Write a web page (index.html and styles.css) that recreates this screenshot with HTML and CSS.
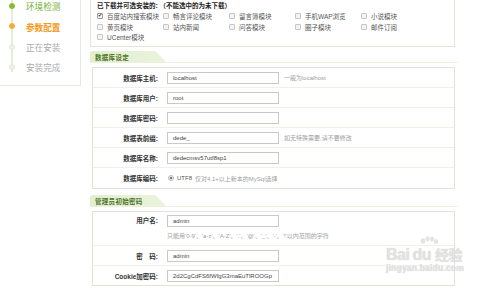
FILE: index.html
```html
<!DOCTYPE html>
<html lang="zh-CN">
<head>
    <meta charset="UTF-8">
    <title>DedeCMS 安装 - 参数配置</title>
    <link rel="stylesheet" href="styles.css">
</head>
<body>
    <div class="page">
        <div class="steps">
            <div class="step done"><span class="dot"></span>环境检测</div>
            <div class="step now"><span class="dot"></span>参数配置</div>
            <div class="step"><span class="dot"></span>正在安装</div>
            <div class="step"><span class="dot"></span>安装完成</div>
        </div>

        <div class="content">
            <div class="modules">
                <div class="mod-title">已下载并可选安装的: （不能选中的为未下载）</div>
                <div class="mod-grid">
                    <div class="mod"><span class="box checked">✔</span>百度站内搜索模块</div>
                    <div class="mod"><span class="box"></span>畅言评论模块</div>
                    <div class="mod"><span class="box"></span>留言簿模块</div>
                    <div class="mod"><span class="box"></span>手机WAP浏览</div>
                    <div class="mod"><span class="box"></span>小说模块</div>
                    <div class="mod"><span class="box"></span>黄页模块</div>
                    <div class="mod"><span class="box"></span>站内新闻</div>
                    <div class="mod"><span class="box"></span>问答模块</div>
                    <div class="mod"><span class="box"></span>圈子模块</div>
                    <div class="mod"><span class="box"></span>邮件订阅</div>
                    <div class="mod"><span class="box"></span>UCenter模块</div>
                </div>
            </div>

            <div class="sect"><span class="sect-tab">数据库设定</span></div>
            <div class="form">
                <div class="row">
                    <label>数据库主机:</label>
                    <span class="input">localhost</span>
                    <span class="hint">一般为localhost</span>
                </div>
                <div class="row">
                    <label>数据库用户:</label>
                    <span class="input">root</span>
                </div>
                <div class="row">
                    <label>数据库密码:</label>
                    <span class="input"></span>
                </div>
                <div class="row">
                    <label>数据表前缀:</label>
                    <span class="input">dede_</span>
                    <span class="hint">如无特殊需要,请不要修改</span>
                </div>
                <div class="row">
                    <label>数据库名称:</label>
                    <span class="input">dedecmsv57utf8sp1</span>
                </div>
                <div class="row last">
                    <label>数据库编码:</label>
                    <span class="radio"></span>
                    <span class="utf">UTF8</span>
                    <span class="hint near">仅对4.1+以上新本的MySql选择</span>
                </div>
            </div>

            <div class="sect admin"><span class="sect-tab">管理员初始密码</span></div>
            <div class="form">
                <div class="row tall">
                    <label>用户名:</label>
                    <div class="field">
                        <span class="input">admin</span>
                        <span class="hint under">只能用'0-9'、'a-z'、'A-Z'、'.'、'@'、'_'、'-'、'!'以内范围的字符</span>
                    </div>
                </div>
                <div class="row">
                    <label>密　码:</label>
                    <span class="input">admin</span>
                </div>
                <div class="row">
                    <label>Cookie加密码:</label>
                    <span class="input">2d2CgCdFS6fWfgG3maEuTlROOGp</span>
                </div>
            </div>

            <div class="sect next"><span class="sect-tab"></span></div>
        </div>

        <div class="mark">
            <svg class="paw" width="22" height="14" viewBox="0 0 22 14">
                <ellipse cx="5" cy="5" rx="2.2" ry="2.8" fill="#e4e4e4"/>
                <ellipse cx="9.5" cy="2.8" rx="2.2" ry="2.6" fill="#e4e4e4"/>
                <ellipse cx="14" cy="3" rx="2.2" ry="2.6" fill="#e4e4e4"/>
                <ellipse cx="18" cy="5.5" rx="2.2" ry="2.6" fill="#e4e4e4"/>
            </svg>
            <div class="mark-top">Bai<span class="du">du</span><span class="jy">经验</span></div>
            <div class="mark-url">jingyan.baidu.com</div>
        </div>
    </div>
</body>
</html>
```

FILE: styles.css
```css
* {
    box-sizing: border-box;
    margin: 0;
    padding: 0;
}

body {
    background: #ffffff;
    font-family: "Liberation Sans", "Noto Sans CJK SC", sans-serif;
    font-size: 6.5px;
    color: #333;
    overflow: hidden;
}

.page {
    position: relative;
    display: flex;
    align-items: flex-start;
    width: 500px;
    height: 288px;
    overflow: hidden;
}

/* left step list */
.steps {
    position: relative;
    width: 81px;
    height: 86px;
    flex-shrink: 0;
    border-right: 1px solid #e6ecdc;
    border-bottom: 1px solid #e6ecdc;
}

.steps::before {
    content: "";
    position: absolute;
    left: 11px;
    top: 0;
    width: 2px;
    height: 72px;
    background: #e4eed6;
}

.step {
    position: relative;
    display: flex;
    align-items: center;
    height: 20.4px;
    padding-left: 26px;
    font-size: 8.6px;
    color: #ababab;
}

.step:first-child {
    margin-top: -4px;
}

.step .dot {
    position: absolute;
    left: 9px;
    top: 7px;
    width: 6px;
    height: 6px;
    border-radius: 50%;
    background: #eef3e6;
    border: 1px solid #e2ead6;
}

.step.done {
    color: #74ad31;
}

.step.done .dot {
    background: #86bd2e;
    border-color: #86bd2e;
}

.step.now {
    color: #f29a1c;
    font-weight: bold;
}

.step.now .dot {
    background: #f6ac3a;
    border-color: #f6ac3a;
}

/* main column */
.content {
    margin-left: 9px;
    width: 365px;
}

.modules {
    border: 1px solid #e4e4d8;
    border-top: none;
    height: 47px;
    padding: 1px 0 0 6px;
}

.mod-title {
    font-weight: bold;
    color: #222;
    height: 9px;
    line-height: 9px;
}

.mod-grid {
    display: grid;
    grid-template-columns: repeat(5, 66px);
    grid-auto-rows: 10.8px;
    padding-top: 0.5px;
}

.mod {
    display: flex;
    align-items: center;
    gap: 4px;
    color: #555;
    white-space: nowrap;
}

.box {
    display: inline-flex;
    align-items: center;
    justify-content: center;
    width: 6px;
    height: 6px;
    border: 1px solid #c6c6c6;
    border-radius: 1px;
    background: #f3f3f3;
    font-size: 5px;
    line-height: 1;
}

.box.checked {
    color: #222;
    background: #fff;
    border-color: #9a9a9a;
}

/* section tabs */
.sect {
    display: flex;
    height: 12px;
    margin-top: 4px;
    margin-right: -3px;
    border-bottom: 1px solid #eef0de;
}

.sect-tab {
    display: flex;
    align-items: center;
    width: 76px;
    height: 11px;
    padding-left: 5px;
    background: linear-gradient(90deg, #e2eecf 0%, #eaf3dc 100%);
    clip-path: polygon(0 0, 86% 0, 100% 100%, 0 100%);
    border-top-left-radius: 3px;
    color: #4d7326;
    font-weight: bold;
    letter-spacing: 0.3px;
}

.sect.admin {
    margin-top: 6px;
}

.sect.next {
    margin-top: 5px;
    margin-left: 2px;
}

.sect.next .sect-tab {
    width: 64px;
    background: none;
    border-top: 1px solid #e2eecf;
}

/* form boxes */
.form {
    margin: 4px 0 0 2px;
    border: 1px solid #e2e2d6;
}

.row {
    display: flex;
    align-items: center;
    height: 20px;
    border-top: 1px solid #f0f0ea;
}

.row:first-child {
    border-top: none;
    height: 19px;
}

.row.last {
    height: 21px;
}

.row label {
    width: 65px;
    text-align: right;
    font-weight: bold;
    color: #333;
    flex-shrink: 0;
}

.input {
    display: flex;
    align-items: center;
    width: 112px;
    height: 12px;
    margin-left: 9px;
    padding-left: 5px;
    border: 1px solid #c9c9c9;
    background: #fff;
    color: #444;
    font-size: 6px;
    flex-shrink: 0;
    white-space: nowrap;
    overflow: hidden;
}

.hint {
    margin-left: 5px;
    color: #a0a0a0;
    font-size: 6px;
    white-space: nowrap;
}

.hint.near {
    margin-left: 3px;
}

.radio {
    width: 6px;
    height: 6px;
    margin-left: 10px;
    border-radius: 50%;
    border: 1px solid #bbb;
    background: radial-gradient(circle, #777 0 1.4px, #f4f4f4 1.6px);
}

.utf {
    margin-left: 3px;
    color: #555;
    font-size: 6px;
}

.row.tall {
    height: 33px;
    align-items: flex-start;
    padding-top: 3px;
}

.row.tall label {
    line-height: 12px;
}

.field {
    display: flex;
    flex-direction: column;
}

.hint.under {
    margin: 4px 0 0 9px;
}

/* watermark */
.mark {
    position: absolute;
    left: 386px;
    top: 236px;
    width: 90px;
    color: #e2e2e2;
    text-shadow: 0 0 1px #d2d2d2;
}

.paw {
    position: absolute;
    left: 32px;
    top: 0;
}

.mark-top {
    margin-top: 8px;
    font-size: 16px;
    font-weight: bold;
    letter-spacing: -0.5px;
}

.du {
    margin-left: 2px;
    padding: 0 1px;
    border-radius: 5px;
}

.jy {
    margin-left: 3px;
    font-size: 14px;
}

.mark-url {
    margin-top: -1px;
    font-size: 8.5px;
    font-weight: bold;
    letter-spacing: 0.2px;
}
```
